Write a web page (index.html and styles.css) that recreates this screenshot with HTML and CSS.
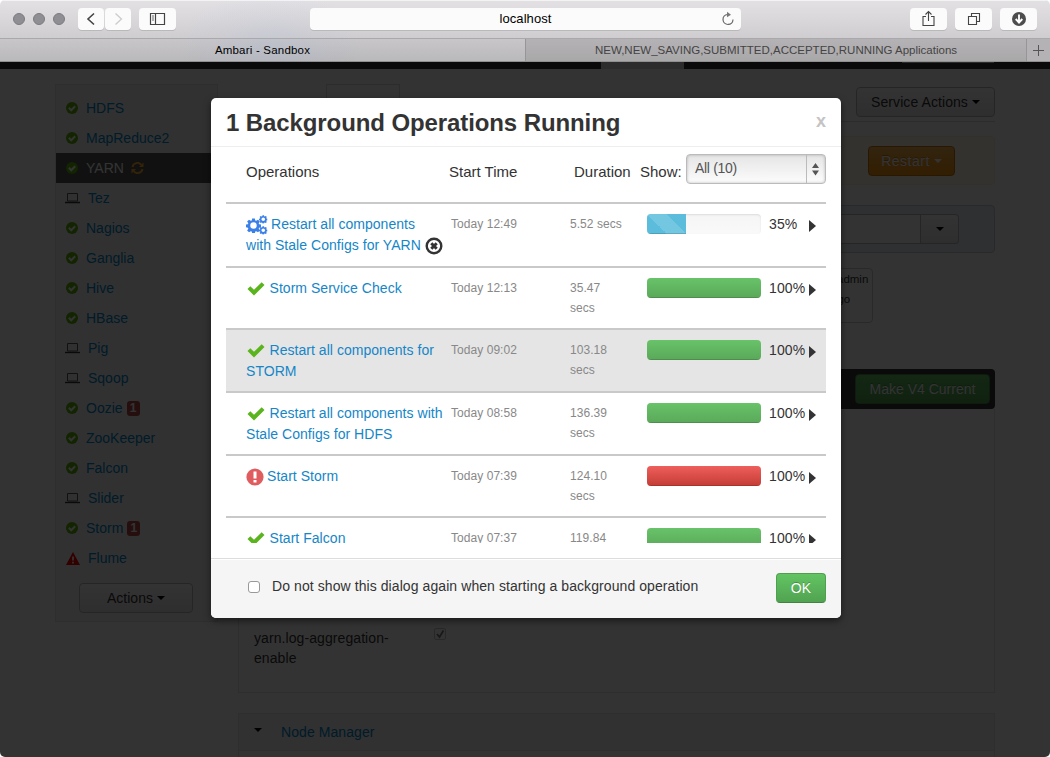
FILE: index.html
```
<!DOCTYPE html>
<html lang="en">
<head>
<meta charset="utf-8">
<title>Ambari - Sandbox</title>
<link rel="stylesheet" href="styles.css">
</head>
<body>
<svg class="defs" width="0" height="0">
  <symbol id="ok" viewBox="0 0 12 12"><circle cx="6" cy="6" r="6" fill="#5ab400"/><path d="M2.900 5.800l2.300 2.400 4-4" fill="none" stroke="#fff" stroke-width="2"/></symbol>
  <symbol id="laptop" viewBox="0 0 15 11"><path d="M2.500 .5h10v7.500h-10z" fill="none" stroke="#555"/><path d="M0 9.500h15" stroke="#333" stroke-width="1.400"/></symbol>
  <symbol id="check" viewBox="0 0 18 15"><path d="M.5 8L3.300 5.200 7 8.800 14.700 1.200 17.500 4 7 14.500z" fill="#5ab41e"/></symbol>
  <symbol id="gear" viewBox="-10 -10 20 20"><path fill-rule="evenodd" d="M-1.800-9.500h3.600l.5 2.700 1.400.6 2.300-1.600 2.500 2.500-1.600 2.300.6 1.400 2.500.4v3.600l-2.500.5-.6 1.400 1.600 2.300-2.500 2.500-2.300-1.600-1.400.6-.5 2.400h-3.600l-.5-2.400-1.400-.6-2.300 1.600-2.500-2.500 1.600-2.300-.6-1.400-2.500-.5v-3.600l2.500-.4.6-1.400-1.600-2.300 2.500-2.500 2.300 1.600 1.400-.6zM0-4.300A4.300 4.300 0 1 0 0 4.300 4.300 4.300 0 1 0 0-4.300z" fill="#3b7fe8"/></symbol>
</svg>
<div class="window">
  <header class="toolbar">
    <div class="lights"><i></i><i></i><i></i></div>
    <div class="nav">
      <span class="tbtn half"><svg width="26" height="22"><path d="M16 5.500L10 11l6 5.500" fill="none" stroke="#444" stroke-width="1.600"/></svg></span>
      <span class="tbtn half"><svg width="26" height="22"><path d="M10.500 5.500l6 5.500-6 5.500" fill="none" stroke="#ccc" stroke-width="1.300"/></svg></span>
    </div>
    <span class="tbtn side"><svg width="37" height="22"><path d="M11.500 5.500h14v11h-14zM16.500 5.500v11" fill="none" stroke="#444" stroke-width="1.200"/><path d="M13 8h2M13 10h2M13 12h2" stroke="#666"/></svg></span>
    <div class="url"><span>localhost</span><svg class="reload" width="14" height="16"><path d="M6.500 3.500A5 5 0 1 0 12 8.500" fill="none" stroke="#666" stroke-width="1.200"/><path d="M6 .8l4 2.900-4 2.600z" fill="#777"/></svg></div>
    <div class="right">
      <span class="tbtn"><svg width="37" height="22"><path d="M16 8.500h-3v9h11v-9h-3M18.500 13V4M15.500 6.500l3-3 3 3" fill="none" stroke="#444" stroke-width="1.100"/></svg></span>
      <span class="tbtn"><svg width="37" height="22"><path d="M13.500 8.500h8v8h-8zM16.500 8V5.500h8v8H22" fill="none" stroke="#444" stroke-width="1.100"/></svg></span>
      <span class="tbtn"><svg width="37" height="22"><circle cx="19" cy="11" r="7" fill="#4d4d4d"/><path d="M19 6.500V14M15.700 11l3.300 3.500 3.300-3.500" fill="none" stroke="#fff" stroke-width="1.900"/></svg></span>
    </div>
  </header>
  <nav class="tabs">
    <div class="tab on">Ambari - Sandbox</div>
    <div class="tab off">NEW,NEW_SAVING,SUBMITTED,ACCEPTED,RUNNING Applications</div>
    <div class="plus"><svg width="11" height="11"><path d="M5.500 0v11M0 5.500h11" stroke="#555"/></svg></div>
  </nav>
  <div class="view">
    <div class="navbar"><span class="navtab"></span><span class="navuser"></span></div>
    <div class="page">
      <aside class="sidebar">
        <ul>
          <li><svg><use href="#ok"/></svg><a>HDFS</a></li>
          <li><svg><use href="#ok"/></svg><a>MapReduce2</a></li>
          <li class="active"><svg><use href="#ok"/></svg><a>YARN</a><svg class="sync" viewBox="0 0 12 12"><path d="M1 5A5 5 0 0 1 9.800 2.800M11 7A5 5 0 0 1 2.200 9.200" fill="none" stroke="#ffae2b" stroke-width="1.900"/><path d="M12 .5V5H7.500zM0 11.500V7h4.500z" fill="#ffae2b"/></svg></li>
          <li class="client"><svg><use href="#laptop"/></svg><a>Tez</a></li>
          <li><svg><use href="#ok"/></svg><a>Nagios</a></li>
          <li><svg><use href="#ok"/></svg><a>Ganglia</a></li>
          <li><svg><use href="#ok"/></svg><a>Hive</a></li>
          <li><svg><use href="#ok"/></svg><a>HBase</a></li>
          <li class="client"><svg><use href="#laptop"/></svg><a>Pig</a></li>
          <li class="client"><svg><use href="#laptop"/></svg><a>Sqoop</a></li>
          <li><svg><use href="#ok"/></svg><a>Oozie</a><b>1</b></li>
          <li><svg><use href="#ok"/></svg><a>ZooKeeper</a></li>
          <li><svg><use href="#ok"/></svg><a>Falcon</a></li>
          <li class="client"><svg><use href="#laptop"/></svg><a>Slider</a></li>
          <li><svg><use href="#ok"/></svg><a>Storm</a><b>1</b></li>
          <li class="warn"><svg viewBox="0 0 14 13"><path d="M7 0l7 13H0z" fill="#f00"/><path d="M7 4.500v4M7 9.700v1.700" stroke="#fff" stroke-width="1.800"/></svg><a>Flume</a></li>
        </ul>
        <div class="btn actions">Actions<i class="caret"></i></div>
      </aside>
      <main class="main">
        <div class="heads">
          <span class="head">Summary</span><span class="head cur">Configs</span>
          <div class="btn service">Service Actions<i class="caret"></i></div>
        </div>
        <div class="alert"><div class="btn restart">Restart<i class="caret"></i></div></div>
        <div class="group"><span class="field"></span><span class="btn drop"><i class="caret"></i></span></div>
        <div class="version"><span>admin</span><span class="ago">ago</span></div>
        <div class="bar"><div class="btn make">Make V4 Current</div></div>
        <div class="panel">
          <span class="prop">yarn.log-aggregation-<br>enable</span>
          <span class="cb"><svg width="10" height="10"><path d="M2 5l2.500 3L8.500 1.500" fill="none" stroke="#333" stroke-width="1.800"/></svg></span>
        </div>
        <div class="accordion"><div class="acc-head"><i class="caret"></i><a>Node Manager</a></div></div>
      </main>
    </div>
    <div class="backdrop"></div>
  </div>
  <section class="modal">
    <div class="m-head"><h3>1 Background Operations Running</h3><span class="close">x</span></div>
    <div class="m-body">
      <div class="cols">
        <span class="c-op">Operations</span><span class="c-time">Start Time</span><span class="c-dur">Duration</span><span class="c-show">Show:</span>
        <div class="select"><span>All (10)</span><svg width="19" height="28"><path d="M.5 0v28" stroke="#bbb"/><path d="M6 13l3.500-5 3.500 5zM6 15.500h7l-3.500 5z" fill="#555"/></svg></div>
      </div>
      <div class="ops">
        <div class="op r64">
          <div class="name"><svg class="gears" width="22" height="20"><use href="#gear" x="0" y="3" width="15" height="15"/><use href="#gear" x="13" y="0" width="8.500" height="8.500"/><use href="#gear" x="13" y="11" width="8.500" height="8.500"/></svg><a>Restart all components<br>with Stale Configs for YARN</a><svg class="abort" width="18" height="18"><circle cx="9" cy="9" r="7.300" fill="none" stroke="#333" stroke-width="2.400"/><path d="M6.300 6.300l5.400 5.400M11.700 6.300l-5.400 5.400" stroke="#333" stroke-width="3"/></svg></div>
          <span class="time">Today 12:49</span><span class="dur">5.52 secs</span><div class="prog"><div class="fill info" style="width:34.500%"></div></div><span class="pct">35%</span><i class="arrow"></i>
        </div>
        <div class="op r62">
          <div class="name"><svg class="ck"><use href="#check"/></svg><a>Storm Service Check</a></div>
          <span class="time">Today 12:13</span><span class="dur">35.47<br>secs</span><div class="prog"><div class="fill good" style="width:100%"></div></div><span class="pct">100%</span><i class="arrow"></i>
        </div>
        <div class="op r63 hover">
          <div class="name"><svg class="ck"><use href="#check"/></svg><a>Restart all components for<br>STORM</a></div>
          <span class="time">Today 09:02</span><span class="dur">103.18<br>secs</span><div class="prog"><div class="fill good" style="width:100%"></div></div><span class="pct">100%</span><i class="arrow"></i>
        </div>
        <div class="op r63">
          <div class="name"><svg class="ck"><use href="#check"/></svg><a>Restart all components with<br>Stale Configs for HDFS</a></div>
          <span class="time">Today 08:58</span><span class="dur">136.39<br>secs</span><div class="prog"><div class="fill good" style="width:100%"></div></div><span class="pct">100%</span><i class="arrow"></i>
        </div>
        <div class="op r62">
          <div class="name"><svg class="err" width="18" height="18"><circle cx="9" cy="9" r="8.600" fill="#df5c5f"/><path d="M9 3.500v7M9 12v2.500" stroke="#fff" stroke-width="3"/></svg><a>Start Storm</a></div>
          <span class="time">Today 07:39</span><span class="dur">124.10<br>secs</span><div class="prog"><div class="fill bad" style="width:100%"></div></div><span class="pct">100%</span><i class="arrow"></i>
        </div>
        <div class="op r62">
          <div class="name"><svg class="ck"><use href="#check"/></svg><a>Start Falcon</a></div>
          <span class="time">Today 07:37</span><span class="dur">119.84</span><div class="prog"><div class="fill good" style="width:100%"></div></div><span class="pct">100%</span><i class="arrow"></i>
        </div>
      </div>
    </div>
    <div class="m-foot"><span class="box"></span><span class="again">Do not show this dialog again when starting a background operation</span><div class="btn ok">OK</div></div>
  </section>
</div>
</body>
</html>
```
FILE: styles.css
```
* { box-sizing: border-box; }
body { margin: 0; background: #fff; font: 14px/20px "Liberation Sans", Arial, sans-serif; color: #333; letter-spacing: .08px; white-space: nowrap; overflow: hidden; }
ul, h3 { margin: 0; padding: 0; list-style: none; }
.defs { position: absolute; }
svg { display: block; flex: none; }
a { color: #08c; }
.window { position: relative; width: 1050px; height: 757px; border-radius: 5px; overflow: hidden; }

/* browser chrome */
.toolbar { display: flex; align-items: flex-start; height: 39px; padding: 8px 13px 0; background: radial-gradient(ellipse 90px 50px at 270px 40px, rgba(165,185,215,.18), transparent), linear-gradient(#e3e1e4, #cfcdd0); border-bottom: 1px solid #a9a8aa; box-shadow: inset 0 1px #f3f3f3; }
.lights { display: flex; gap: 8px; padding-top: 5px; width: 65px; }
.lights i { width: 12px; height: 12px; border-radius: 50%; background: #8f8e93; border: 1px solid #7c7b80; }
.nav { display: flex; gap: 1px; margin-right: 8px; }
.tbtn, .url { width: 37px; height: 22px; background: #fbfbfb; border-radius: 4px; box-shadow: 0 1px #b9b8bb; }
.tbtn.half { width: 26px; }
.url { display: flex; width: 431px; margin-left: 134px; justify-content: center; font-size: 13px; line-height: 22px; color: #000; position: relative; }
.reload { position: absolute; right: 6px; top: 3px; }
.right { display: flex; gap: 8px; margin-left: auto; }
.tabs { display: flex; height: 23px; font-size: 11.500px; line-height: 22px; text-align: center; border-bottom: 1px solid #909090; background: #b4b2b4; }
.tab.on { width: 525px; color: #000; letter-spacing: .2px; background: radial-gradient(ellipse 90px 50px at 270px 10px, rgba(160,180,215,.22), transparent), linear-gradient(#c8c6c9, #b9b8ba); }
.tab.off { width: 502px; color: #444; letter-spacing: 0; border-left: 1px solid #969597; border-right: 1px solid #969597; background: linear-gradient(#b4b2b4, #a9a8a9); }
.plus { width: 23px; padding: 6px 0 0 6px; }

/* page below the backdrop */
.view { position: relative; height: 695px; background: #fff; }
.navbar { display: flex; height: 7px; background: #333; padding-left: 601px; }
.navtab { width: 83px; background: #ddd; }
.navuser { width: 92px; height: 1px; margin-left: 218px; background: #ddd; }
.page { display: flex; gap: 20px; padding: 15px 55px 0; }
.sidebar { width: 163px; height: 538px; border: 1px solid #e3e3e3; background: #f5f5f5; padding-top: 8px; letter-spacing: 0; }
.sidebar li { display: flex; align-items: center; height: 30px; padding-left: 10px; }
.sidebar li svg { width: 12px; height: 12px; margin-right: 8px; }
.sidebar li.client svg { width: 15px; height: 11px; margin: 0 8px 0 -1px; }
.sidebar li.warn svg { width: 14px; height: 13px; }
.sidebar li.active { background: #555; }
.active a { color: #fff; }
.sidebar li svg.sync { margin: 0 0 0 7px; width: 13px; height: 12px; }
.sidebar b { background: #b94a48; color: #fff; font-size: 12px; line-height: 15px; width: 13px; text-align: center; border-radius: 3px; margin-left: 4px; }
.btn { display: flex; align-items: center; justify-content: center; height: 30px; border: 1px solid #bbb; border-radius: 4px; background: linear-gradient(#fff, #e6e6e6); }
.caret { width: 0; border: 4px solid transparent; border-top-color: #000; border-bottom: 0; margin-left: 4px; }
.actions { width: 114px; margin: 10px 0 0 23px; }
.main { width: 757px; }
.heads { display: flex; height: 38px; border-bottom: 1px solid #ddd; }
.head { padding: 9px 14px; width: 88px; }
.head.cur { width: 74px; border: 1px solid #ddd; border-bottom: 0; }
.service { width: 139px; margin: 3px 0 0 auto; }
.alert { display: flex; justify-content: flex-end; height: 49px; margin-top: 14px; padding: 9px 39px 0 0; background: #fcf8e3; border: 1px solid #fbeed5; border-radius: 4px; }
.restart { width: 87px; color: #fff; background: linear-gradient(#fbb450, #f89406); border-color: #c67605; text-shadow: 0 -1px rgba(0,0,0,.25); letter-spacing: .5px; }
.restart .caret { border-top-color: #fff; }
.group { display: flex; justify-content: flex-end; height: 48px; margin-top: 20px; padding: 8px 35px 0 0; background: #e6edf5; border: 1px solid #c5ccd4; border-radius: 4px; }
.field { width: 400px; height: 30px; background: #fff; border: 1px solid #bbb; }
.drop { width: 38px; border-left: 0; border-radius: 0 4px 4px 0; }
.drop .caret { margin: 0; }
.version { display: flex; flex-direction: column; width: 135px; height: 55px; margin: 15px 0 0 500px; border: 1px solid #ccc; border-radius: 4px; font-size: 11.500px; padding-left: 98px; letter-spacing: 0; }
.ago { margin-left: -6px; }
.bar { display: flex; justify-content: flex-end; height: 40px; margin-top: 46px; padding: 5px; background: #333; border-radius: 4px; }
.make { width: 135px; color: #fff; background: linear-gradient(#62c462, #51a351); border-color: #468847; text-shadow: 0 -1px rgba(0,0,0,.25); letter-spacing: 0; }
.panel { display: flex; align-items: flex-start; height: 284px; padding: 219px 0 0 15px; border: 1px solid #e5e5e5; border-top: 0; }
.prop { width: 180px; }
.cb { width: 12px; height: 12px; border: 1px solid #aaa; border-radius: 2px; opacity: .65; }
.accordion { height: 60px; margin-top: 20px; border: 1px solid #e5e5e5; }
.acc-head { display: flex; height: 37px; padding-left: 11px; align-items: center; background: #f3f3f3; border-bottom: 1px solid #e5e5e5; }
.acc-head .caret { margin: -4px 19px 0 4px; }
.backdrop { position: absolute; inset: 0; background: rgba(0,0,0,.8); }

/* dialog */
.modal { position: absolute; left: 211px; top: 98px; width: 630px; height: 520px; display: flex; flex-direction: column; background: #fff; border-radius: 5px; overflow: hidden; box-shadow: 0 3px 7px rgba(0,0,0,.5); }
.m-head { display: flex; justify-content: space-between; height: 49px; padding: 5px 15px 0; border-bottom: 1px solid #eee; }
.m-head h3 { font-size: 24px; line-height: 40px; letter-spacing: -.1px; }
.close { font-size: 18px; font-weight: bold; line-height: 36px; color: #c4c4c4; }
.m-body { height: 411px; padding: 7px 15px 0; }
.cols { display: flex; height: 48px; padding-left: 20px; line-height: 36px; font-size: 15px; letter-spacing: 0; }
.c-op { width: 203px; }
.c-time { width: 125px; }
.c-dur { width: 66px; }
.c-show { width: 46px; }
.select { display: flex; justify-content: space-between; width: 140px; height: 30px; border: 1px solid #bbb; border-radius: 4px; padding-left: 8px; font-size: 14px; line-height: 27px; letter-spacing: -.3px; color: #555; background: linear-gradient(#e5e5e5, #fcfcfc); box-shadow: inset 0 0 3px rgba(0,0,0,.25); }
.ops { height: 341px; overflow: hidden; }
.op { display: flex; align-items: flex-start; padding: 10px 0 0 20px; border-top: 2px solid #c9c9c9; }
.op a { color: #1586c8; }
.r64 { height: 64px; } .r63 { height: 63px; } .r62 { height: 62px; }
.hover { background: #e5e5e5; }
.name { width: 205px; line-height: 21px; letter-spacing: .04px; }
.name svg { display: inline-block; }
.gears { vertical-align: -6px; margin-right: 3px; }
.ck { width: 18px; height: 15px; vertical-align: -3px; margin: 0 5px 0 .5px; }
.err { vertical-align: -5px; margin-right: 3px; }
.abort { vertical-align: -5px; margin-left: 4px; }
.name .gears, .name .abort, .name .err { margin-top: -4px; }
.time, .dur { font-size: 12px; color: #888; letter-spacing: .05px; }
.time { width: 119px; }
.dur { width: 77px; }
.prog { width: 114px; height: 20px; border-radius: 4px; overflow: hidden; background: linear-gradient(#f5f5f5, #f9f9f9); box-shadow: inset 0 1px 2px rgba(0,0,0,.1); }
.fill { height: 20px; box-shadow: inset 0 -1px rgba(0,0,0,.15); }
.good { background: linear-gradient(#68c368, #5aa85a); }
.bad { background: linear-gradient(#ee5f5b, #c43c35); }
.info { background: linear-gradient(45deg, rgba(255,255,255,.15) 25%, transparent 25%, transparent 50%, rgba(255,255,255,.15) 50%, rgba(255,255,255,.15) 75%, transparent 75%) 0 0 / 40px 40px, #5bbddb; }
.pct { width: 40px; margin-left: 8px; letter-spacing: .1px; }
.arrow { height: 0; border: 6px solid transparent; border-left: 7px solid #333; border-right: 0; margin-top: 6px; }
.m-foot { display: flex; height: 60px; padding: 14px 15px 0 37px; background: #f5f5f5; border-top: 1px solid #ddd; box-shadow: inset 0 1px #fff; }
.box { width: 12px; height: 12px; margin: 8px 12px 0 0; border: 1px solid #999; border-radius: 3px; background: #fff; }
.again { line-height: 26px; }
.ok { width: 50px; margin-left: auto; color: #fff; background: linear-gradient(#62c462, #51a351); border-color: #4f9f4f #4f9f4f #428242; text-shadow: 0 -1px rgba(0,0,0,.25); }
```
